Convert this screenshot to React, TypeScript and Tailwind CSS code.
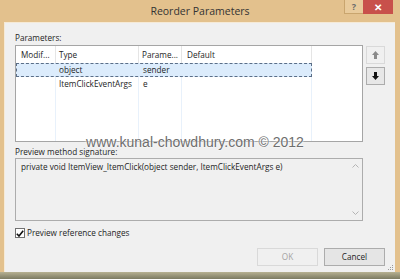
import React from "react";

const font = "font-['Segoe_UI','Open_Sans',sans-serif]";

const UpArrow = ({ color }: { color: string }) => (
  <svg width="7" height="8" viewBox="0 0 7 8">
    <path d="M3.5 0 L7 4 L5 4 L5 8 L2 8 L2 4 L0 4 Z" fill={color} />
  </svg>
);

const DownArrow = ({ color }: { color: string }) => (
  <svg width="7" height="8" viewBox="0 0 7 8">
    <path d="M3.5 8 L7 4 L5 4 L5 0 L2 0 L2 4 L0 4 Z" fill={color} />
  </svg>
);

const Chevron = ({ up }: { up?: boolean }) => (
  <svg width="7" height="4" viewBox="0 0 7 4">
    <path
      d={up ? "M0.5 3.5 L3.5 0.5 L6.5 3.5" : "M0.5 0.5 L3.5 3.5 L6.5 0.5"}
      stroke="#b4b4b4"
      strokeWidth="1"
      fill="none"
    />
  </svg>
);

type Param = { type: string; name: string };

const params: Param[] = [
  { type: "object", name: "sender" },
  { type: "ItemClickEventArgs", name: "e" },
];

const App = () => {
  return (
    <div className={`${font} w-[400px] h-[279px] flex flex-col bg-[#e3c18d] overflow-hidden text-[8.2px] text-[#1e1e1e]`}>
      {/* title bar */}
      <div className="h-[22px] grid grid-cols-[1fr_auto_1fr] shrink-0">
        <div />
        <div className="text-[10.5px] leading-[23px] text-[#333333]">Reorder Parameters</div>
        <div className="flex justify-end items-start pr-[7px]">
          <div className="w-[19px] h-[14px] border-b border-l border-[#c9a56e] bg-[#e9cb9c] flex items-center justify-center text-[9px] font-bold text-[#6b6b6b] leading-none">
            ?
          </div>
          <div className="w-[30px] h-[14px] bg-[#c8504b] flex items-center justify-center text-[10px] font-bold text-white leading-none">
            ✕
          </div>
        </div>
      </div>

      {/* client area */}
      <div className="flex-1 ml-[4px] mr-[5px] bg-[#f0f0f0] relative flex flex-col px-[10px] pt-[9px] border-l border-t border-[#f6ead6]">
        <div className="h-[12px] leading-[12px]">Parameters:</div>

        <div className="flex gap-[3px] mt-[1px]">
          <div className="w-[348px] h-[97px] bg-white border border-[#a5a5a5] flex flex-col overflow-hidden">
            {/* header */}
            <div className="h-[17px] flex shrink-0">
              <div className="w-[40px] pl-[5px] leading-[17px] border-r border-[#e5e5e5]">Modif...</div>
              <div className="w-[83px] pl-[3px] leading-[17px] border-r border-[#e5e5e5]">Type</div>
              <div className="w-[43px] pl-[3px] leading-[17px] border-r border-[#e5e5e5]">Parame...</div>
              <div className="w-[130px] pl-[5px] leading-[17px] border-r border-[#e5e5e5]">Default</div>
              <div className="flex-1" />
            </div>
            {/* rows */}
            <div className="flex-1 relative flex">
              <div className="w-[40px] border-r border-[#e8f1fb]" />
              <div className="w-[83px] border-r border-[#e8f1fb]" />
              <div className="w-[43px] border-r border-[#e8f1fb]" />
              <div className="w-[130px] border-r border-[#e8f1fb]" />
              <div className="absolute inset-x-0 top-0 flex flex-col">
                {params.map((p, i) => (
                  <div
                    key={p.name}
                    className={`h-[14px] w-[296px] flex leading-[12px] ${
                      i === 0 ? "bg-[#dcecfc] border border-dashed border-[#5a6e88]" : "border border-transparent"
                    }`}
                  >
                    <div className="w-[39px]" />
                    <div className="w-[83px] pl-[3px]">{p.type}</div>
                    <div className="w-[43px] pl-[4px]">{p.name}</div>
                  </div>
                ))}
              </div>
            </div>
          </div>

          <div className="flex flex-col gap-[3px] mt-[1px]">
            <div className="w-[19px] h-[18px] border border-[#d9d9d9] bg-[#f0f0f0] flex items-center justify-center">
              <UpArrow color="#8a8a8a" />
            </div>
            <div className="w-[19px] h-[18px] border border-[#acacac] bg-[#e7e7e7] flex items-center justify-center">
              <DownArrow color="#111111" />
            </div>
          </div>
        </div>

        <div className="h-[12px] leading-[12px] mt-[4px]">Preview method signature:</div>
        <div className="w-[348px] h-[63px] border border-[#acacac] bg-[#f0f0f0] flex">
          <div className="flex-1 pl-[5px] pt-[2px] leading-[12px]">
            private void ItemView_ItemClick(object sender, ItemClickEventArgs e)
          </div>
          <div className="w-[14px] flex flex-col items-center justify-between pt-[5px] pb-[5px]">
            <Chevron up />
            <Chevron />
          </div>
        </div>

        <div className="flex items-center gap-[2px] mt-[6px] h-[12px]">
          <div className="w-[10px] h-[10px] border border-[#707070] bg-white flex items-center justify-center">
            <svg width="8" height="7" viewBox="0 0 8 7">
              <path d="M0.8 3.8 L3 6 L7.2 0.8" stroke="#111" strokeWidth="1.6" fill="none" />
            </svg>
          </div>
          <span className="leading-[12px]">Preview reference changes</span>
        </div>

        <div className="flex justify-end gap-[6px] mt-[9px]">
          <div className="w-[61px] h-[18px] border border-[#d9d9d9] bg-[#f0f0f0] flex items-center justify-center text-[#a3a3a3]">
            OK
          </div>
          <div className="w-[61px] h-[18px] border border-[#acacac] bg-[#e5e5e5] flex items-center justify-center">
            Cancel
          </div>
        </div>

        {/* watermark */}
        <div className="absolute left-0 right-0 top-[109px] flex justify-center pointer-events-none">
          <span className="font-['Liberation_Sans',sans-serif] text-[14px] text-[#6e6e6e] [text-shadow:0_0_2px_#fff,0_0_2px_#fff] pr-[10px]">
            www.kunal-chowdhury.com © 2012
          </span>
        </div>

        {/* resize grip */}
        <div className="absolute right-[2px] bottom-[2px] grid grid-cols-3 gap-[1px]">
          {[0, 0, 1, 0, 1, 1, 1, 1, 1].map((v, i) => (
            <div key={i} className={`w-[1px] h-[1px] ${v ? "bg-[#9a9a9a]" : "bg-transparent"}`} />
          ))}
        </div>
      </div>

      <div className="h-[7px] shrink-0 bg-gradient-to-b from-[#b7b192] to-[#7c7b62]" />
    </div>
  );
};

export default App;
